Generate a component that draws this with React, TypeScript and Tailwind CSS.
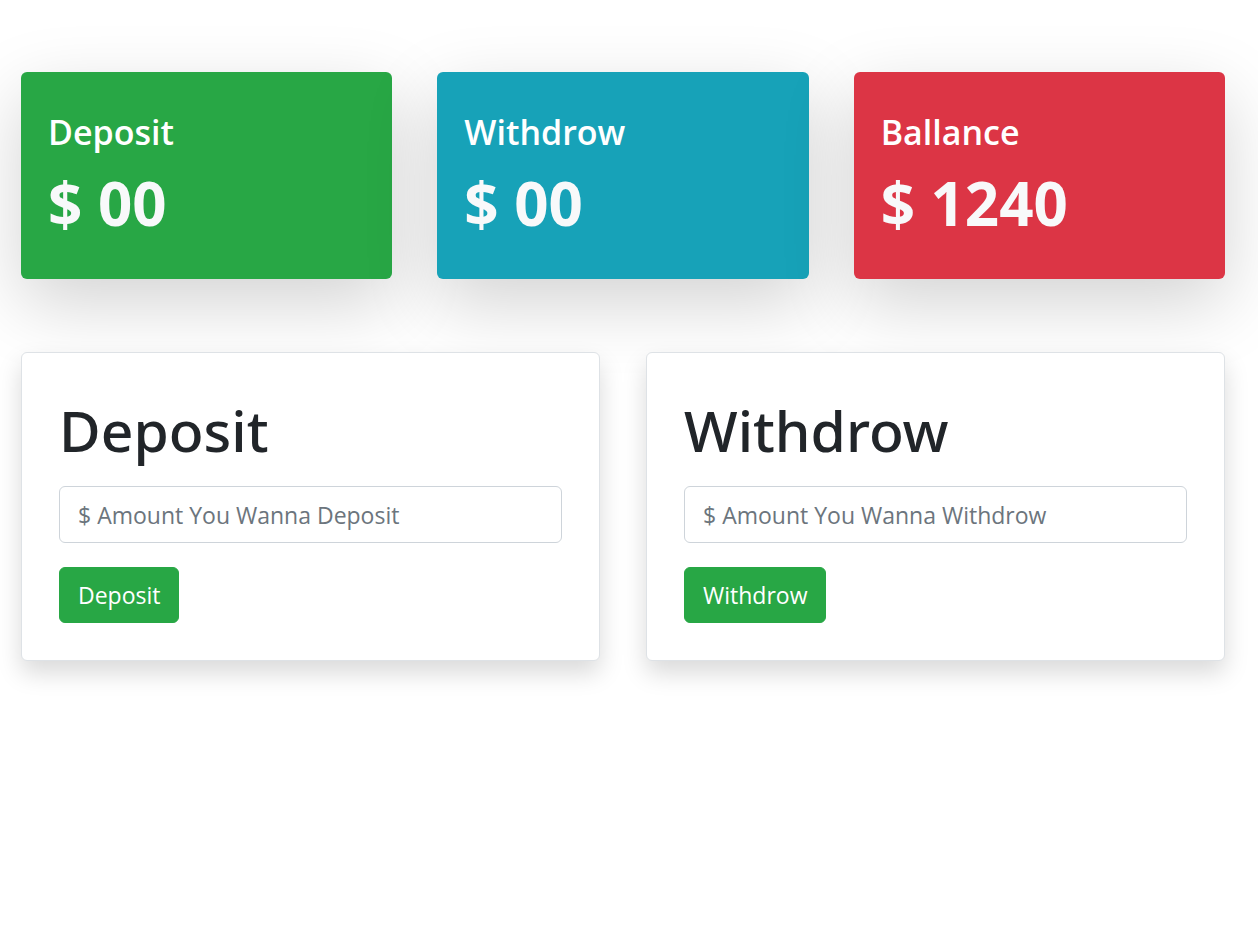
export default function App() {
    const stats = [
        { label: "Deposit", value: "$ 00", bg: "bg-[#28a745]" },
        { label: "Withdrow", value: "$ 00", bg: "bg-[#17a2b8]" },
        { label: "Ballance", value: "$ 1240", bg: "bg-[#dc3545]" },
    ];
    const forms = [
        { title: "Deposit", placeholder: "$ Amount You Wanna Deposit" },
        { title: "Withdrow", placeholder: "$ Amount You Wanna Withdrow" },
    ];

    return <div className="min-h-screen bg-white pl-[21px] pr-[33px] pt-[72px] font-['Open_Sans',sans-serif]">
        <div className="grid grid-cols-3 gap-[45px]">
            {stats.map((s) => (
                <div key={s.label} className={`${s.bg} h-[207px] rounded-[6px] px-[27px] pt-[39px] shadow-[0_24px_72px_rgba(0,0,0,0.175)]`}>
                    <h4 className="text-[34px] leading-[43px] font-semibold text-white mb-[13px]">{s.label}</h4>
                    <h1 className="text-[60px] leading-[72px] font-bold text-[#f8f9fa]">{s.value}</h1>
                </div>
            ))}
        </div>
        <div className="grid grid-cols-2 gap-[46px] mt-[73px]">
            {forms.map((f) => (
                <div key={f.title} className="bg-white border border-[#dee2e6] rounded-[6px] p-[37px] shadow-[0_12px_24px_rgba(0,0,0,0.15)]">
                    <h1 className="font-['Noto_Sans',sans-serif] text-[57px] leading-[72px] font-medium text-[#212529] pt-[4px] mb-[20px]">{f.title}</h1>
                    <input
                        type="number"
                        placeholder={f.placeholder}
                        className="block w-full h-[57px] border border-[#ced4da] rounded-[6px] px-[18px] text-[23px] text-[#495057] placeholder:text-[#6c757d] outline-none mb-[24px]"
                    />
                    <button className="bg-[#28a745] text-white text-[23px] leading-[36px] px-[18px] py-[9px] border border-[#28a745] rounded-[6px]">
                        {f.title}
                    </button>
                </div>
            ))}
        </div>
    </div>
}
